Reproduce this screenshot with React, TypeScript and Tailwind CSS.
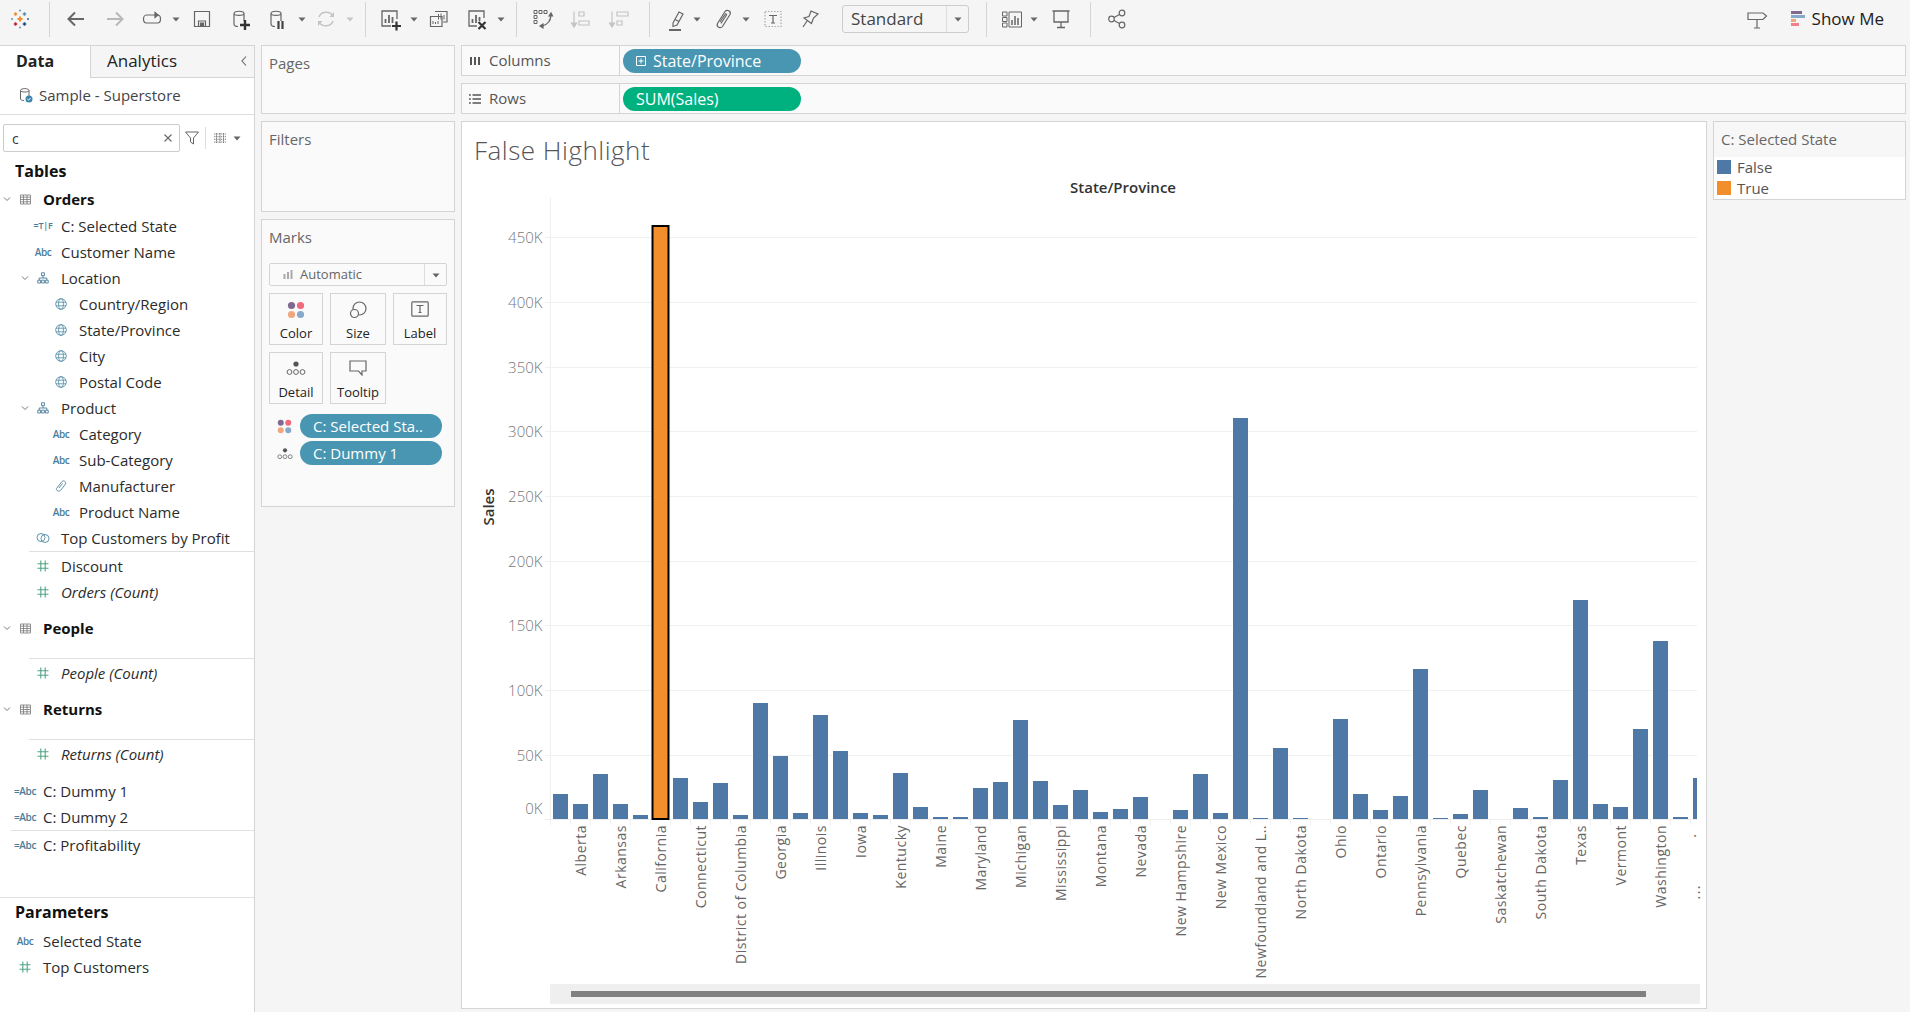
import type { ReactNode } from "react"

const barHeights = [
  25, 15, 45, 15, 4, 594, 41, 17, 36, 4, 116, 63, 6, 104, 68, 6, 4, 46, 12, 2, 2, 31, 37, 99, 38, 14, 29, 7, 10, 22, 0, 9, 45, 6,
  401, 1, 71, 1, 0, 100, 25, 9, 23, 150, 1, 5, 29, 0, 11, 2, 39, 219, 15, 12, 90, 178, 2, 41,
]

const stateLabels: Record<number, string> = {
  1: "Alberta",
  3: "Arkansas",
  5: "California",
  7: "Connecticut",
  9: "District of Columbia",
  11: "Georgia",
  13: "Illinois",
  15: "Iowa",
  17: "Kentucky",
  19: "Maine",
  21: "Maryland",
  23: "Michigan",
  25: "Mississippi",
  27: "Montana",
  29: "Nevada",
  31: "New Hampshire",
  33: "New Mexico",
  35: "Newfoundland and L..",
  37: "North Dakota",
  39: "Ohio",
  41: "Ontario",
  43: "Pennsylvania",
  45: "Quebec",
  47: "Saskatchewan",
  49: "South Dakota",
  51: "Texas",
  53: "Vermont",
  55: "Washington",
}

const axisTicks = ["450K", "400K", "350K", "300K", "250K", "200K", "150K", "100K", "50K"]

function Icon({ children, className = "" }: { children: ReactNode; className?: string }) {
  return (
    <svg viewBox="0 0 24 24" fill="none" stroke="#666" strokeWidth="1.2" className={`h-6 w-6 shrink-0 ${className}`}>
      {children}
    </svg>
  )
}

function Caret({ className = "", light = false }: { className?: string; light?: boolean }) {
  return (
    <svg viewBox="0 0 8 8" className={`h-2 w-2 shrink-0 ${className}`}>
      <path d="M0.5 2.5H7.5L4 6.5Z" fill={light ? "#c4c4c4" : "#666"} />
    </svg>
  )
}

function Sep({ className = "" }: { className?: string }) {
  return <div className={`h-[35px] w-px shrink-0 bg-[#d4d4d4] ${className}`} />
}

function Logo() {
  const marks = [
    { x: 12, y: 12, s: 5, w: 2, c: "#f28e2b" },
    { x: 7.5, y: 7, s: 3.5, w: 1.6, c: "#f28e2b" },
    { x: 16.5, y: 7, s: 3.5, w: 1.6, c: "#5b8fa8" },
    { x: 7.5, y: 17, s: 3.5, w: 1.6, c: "#c72035" },
    { x: 16.5, y: 17, s: 3.5, w: 1.6, c: "#1f4a80" },
    { x: 12, y: 3.5, s: 2, w: 1.2, c: "#6d9bb5" },
    { x: 12, y: 20.5, s: 2, w: 1.2, c: "#7a99ac" },
    { x: 4, y: 12, s: 2, w: 1.2, c: "#7a99ac" },
    { x: 20, y: 12, s: 2, w: 1.2, c: "#4a6d8c" },
  ]
  return (
    <svg viewBox="0 0 24 24" className="ml-2 h-6 w-6 shrink-0">
      {marks.map((m, i) => (
        <path key={i} d={`M${m.x - m.s / 2} ${m.y}h${m.s}M${m.x} ${m.y - m.s / 2}v${m.s}`} stroke={m.c} strokeWidth={m.w} />
      ))}
    </svg>
  )
}

function Cylinder() {
  return <path d="M5 6.5C5 3.5 15 3.5 15 6.5V14M5 6.5C5 9 15 9 15 6.5M5 6.5V17C5 18.5 7 19.5 9 19.5" />
}

function BarsBox() {
  return (
    <>
      <path d="M19 12V4H4V19H13" strokeWidth="1.3" />
      <path d="M7.5 16V12M11 16V8M14.5 16V10" strokeWidth="1.8" />
    </>
  )
}

function Toolbar() {
  return (
    <div className="flex h-[45px] shrink-0 items-center pb-[7px]">
      <Logo />
      <Sep className="ml-[17px]" />
      <Icon className="ml-[14px]">
        <path d="M20 12H5M11 5.5L4.5 12L11 18.5" strokeWidth="2" />
      </Icon>
      <Icon className="ml-[15px]">
        <path d="M4 12H19M13 5.5L19.5 12L13 18.5" stroke="#b8b8b8" strokeWidth="2" />
      </Icon>
      <Icon className="ml-[13px]">
        <path d="M16 8H6.5C2.5 8 2.5 16 6.5 16H17.5C21.5 16 21.5 8 17.5 8" />
        <path d="M15 5.5L18 8L15 10.5Z" fill="#666" />
      </Icon>
      <Caret className="ml-2" />
      <Icon className="ml-[10px]">
        <path d="M4.5 4.5H19.5V19.5H4.5Z" />
        <path d="M8.5 19.5V14H15.5V19.5" />
        <path d="M10.5 16H13.5V19.5H10.5Z" fill="#666" />
      </Icon>
      <Icon className="ml-[15px]">
        <Cylinder />
        <path d="M11 18H21M16 13V23" strokeWidth="2.4" stroke="#333" />
      </Icon>
      <Icon className="ml-[13px]">
        <Cylinder />
        <path d="M12.5 14V22M16.5 14V22" strokeWidth="2.2" stroke="#444" />
      </Icon>
      <Caret className="ml-2" />
      <Icon className="ml-2">
        <path d="M5 10C7 4 16 3.5 19 9M19 14C17 20 8 20.5 5 15" stroke="#c4c4c4" strokeWidth="1.5" />
        <path d="M20 5V10H15.5ZM4 19V14H8.5Z" fill="#c4c4c4" stroke="none" />
      </Icon>
      <Caret light className="ml-2" />
      <Sep className="ml-[11px]" />
      <Icon className="ml-3">
        <BarsBox />
        <path d="M14 19H23M18.5 14.5V23.5" strokeWidth="2.2" stroke="#333" />
      </Icon>
      <Caret className="ml-2" />
      <Icon className="ml-[9px]">
        <path d="M8 4.5H20V15H16" />
        <path d="M3.5 9.5H15V19.5H3.5Z" />
        <path d="M11.5 12.5V7M14 12.5V6.5M17 12.5V8M6 17V14M8.5 17V15M11 17V14" strokeWidth="1" />
      </Icon>
      <Icon className="ml-[14px]">
        <path d="M19 11V4H4V19H12" strokeWidth="1.3" />
        <path d="M7.5 16V12M11 16V8M14.5 14V10" strokeWidth="1.8" />
        <path d="M13.5 15L20.5 22M20.5 15L13.5 22" strokeWidth="2.2" stroke="#333" />
      </Icon>
      <Caret className="ml-2" />
      <Sep className="ml-[11px]" />
      <Icon className="ml-[14px]">
        <path d="M3 3.5H6V6.5H3ZM8 3.5H11V6.5H8ZM13 3.5H16V6.5H13ZM3 8.5H6V11.5H3ZM3 13.5H6V16.5H3Z" strokeWidth="1" />
        <path d="M19.5 8C20.5 13 16.5 18 11 19" />
        <path d="M18 9L20 6L21.5 9ZM12 17L9 19L12 21Z" fill="#666" />
      </Icon>
      <Icon className="ml-[15px]">
        <path d="M4 4.5V19M1.5 16L4 20L6.5 16Z" stroke="#c4c4c4" fill="#c4c4c4" />
        <path d="M9 5H14V9H9ZM9 14H19V18H9Z" stroke="#c4c4c4" />
      </Icon>
      <Icon className="ml-[14px]">
        <path d="M4 4.5V19M1.5 16L4 20L6.5 16Z" stroke="#c4c4c4" fill="#c4c4c4" />
        <path d="M9 5H20V9H9ZM9 14H14V18H9Z" stroke="#c4c4c4" />
      </Icon>
      <Sep className="ml-[17px]" />
      <Icon className="ml-[14px]">
        <path d="M9 16L15 5L19 7L13 18L9 19.5ZM11 12.5L15 14.5" />
        <path d="M5 23H17" strokeWidth="2" />
      </Icon>
      <Caret className="ml-[5px]" />
      <Icon className="ml-[10px]">
        <path d="M6.5 16.5L14 4.5C16 2 20.5 4 19 7.5L11.5 19.5C9.5 22 5 20 6.5 16.5Z" />
        <path d="M10 16.5L15.5 8C16 7 14.5 6.5 14 7.5L9 15" />
      </Icon>
      <Caret className="ml-[7px]" />
      <Icon className="ml-[11px]">
        <path d="M4 4.5H20V19.5H4Z" stroke="#aaa" strokeDasharray="1.5 1.5" />
        <path d="M8 8.5H16M12 8.5V16M10 16H14" strokeWidth="1.2" />
      </Icon>
      <Icon className="ml-[13px]">
        <path d="M13 4L20 7L15.5 11L13.5 16.5L6 11L11 9.5ZM9 14L5 20" />
      </Icon>
      <div className="ml-5 flex h-7 w-[127px] shrink-0 items-center rounded-[3px] border border-[#ccc]">
        <span className="flex-1 pl-2 text-[17px] text-[#444]">Standard</span>
        <div className="flex h-full w-[22px] items-center justify-center border-l border-[#ddd]">
          <Caret />
        </div>
      </div>
      <Sep className="ml-[17px]" />
      <Icon className="ml-[13px]">
        <path d="M2.5 5H7V9H2.5ZM2.5 10.5H7V14.5H2.5ZM2.5 16H7V20H2.5Z" strokeWidth="1" />
        <path d="M9 5H21.5V20H9Z" strokeWidth="1" />
        <path d="M12 18V13M15 18V9M18 18V11" strokeWidth="1.5" />
      </Icon>
      <Caret className="ml-[6px]" />
      <Icon className="ml-[11px]">
        <path d="M3.5 4H20.5M5 4V15H19V4M12 15V20M8 20.5H16" strokeWidth="1.3" />
      </Icon>
      <Sep className="ml-[17px]" />
      <Icon className="ml-[14px]">
        <circle cx="17" cy="6" r="2.8" />
        <circle cx="6.5" cy="12" r="2.8" />
        <circle cx="17" cy="18" r="2.8" />
        <path d="M9 10.5L14.5 7.5M9 13.5L14.5 16.5" />
      </Icon>
      <Icon className="ml-auto">
        <path d="M3 6H18L21.5 9L18 12.5H3ZM12 12.5V21M9 21H15" />
      </Icon>
      <svg viewBox="0 0 14 16" className="ml-[22px] h-4 w-[14px] shrink-0">
        <rect x="0" y="0" width="11" height="3" fill="#81688f" />
        <rect x="0" y="4" width="14" height="3" fill="#86a9cc" />
        <rect x="0" y="8" width="5" height="3" fill="#f1a77e" />
        <rect x="0" y="12" width="8" height="3" fill="#f2808c" />
      </svg>
      <span className="ml-[7px] mr-[26px] text-[17px] text-[#222]">Show Me</span>
    </div>
  )
}

function AbcIcon({ calc = false }: { calc?: boolean }) {
  return (
    <span className="whitespace-nowrap text-[10px] font-semibold tracking-[-0.4px] text-[#4b7d9a]">
      {calc ? "=Abc" : "Abc"}
    </span>
  )
}

function BoolIcon() {
  return <span className="whitespace-nowrap text-[9px] font-semibold tracking-[-0.3px] text-[#4b7d9a]">=T|F</span>
}

function HashIcon() {
  return (
    <svg viewBox="0 0 12 12" className="h-3 w-3" stroke="#4fa584" strokeWidth="1.1" fill="none">
      <path d="M0.5 3.8H11.5M0.5 8.2H11.5M3.8 0.5V11.5M8.2 0.5V11.5" />
    </svg>
  )
}

function GlobeIcon() {
  return (
    <svg viewBox="0 0 12 12" className="h-3 w-3" stroke="#5f94ab" strokeWidth="0.9" fill="none">
      <circle cx="6" cy="6" r="5.3" />
      <ellipse cx="6" cy="6" rx="2.4" ry="5.3" />
      <path d="M1 4.2H11M1 7.8H11" />
    </svg>
  )
}

function HierarchyIcon() {
  return (
    <svg viewBox="0 0 12 12" className="h-3 w-3" stroke="#4b7d9a" strokeWidth="0.9" fill="none">
      <path d="M4.5 0.8H7.5V3.6H4.5ZM0.8 8.2H3.6V11H0.8ZM8.4 8.2H11.2V11H8.4ZM6 3.6V6H2.2V8.2M6 6H9.8V8.2M4.6 8.2H7.4V11H4.6Z" />
    </svg>
  )
}

function TableIcon() {
  return (
    <svg viewBox="0 0 11 11" className="h-[11px] w-[11px]" stroke="#777" strokeWidth="0.8" fill="none">
      <path d="M0.5 1H10.5V10H0.5ZM0.5 3.2H10.5M0.5 5.5H10.5M0.5 7.8H10.5M3.5 1V10M7 1V10" />
    </svg>
  )
}

function ClipIcon() {
  return (
    <svg viewBox="0 0 12 12" className="h-3 w-3" stroke="#5f94ab" strokeWidth="1" fill="none">
      <path d="M1.5 8.5L7 1.5C8.5 0 11.5 1.5 10.5 4L5.5 10.5C4 12 0.5 10.5 1.5 8.5Z" />
      <path d="M4 8L7.5 3.5" />
    </svg>
  )
}

function SetIcon() {
  return (
    <svg viewBox="0 0 14 12" className="h-3 w-[14px]" stroke="#5f94ab" strokeWidth="1" fill="none">
      <circle cx="5" cy="5.5" r="4" />
      <circle cx="9" cy="6.5" r="4" />
    </svg>
  )
}

function Chevron() {
  return (
    <svg viewBox="0 0 10 10" className="mr-[3px] h-[10px] w-[10px] shrink-0" stroke="#777" strokeWidth="1" fill="none">
      <path d="M2 3.5L5 6.5L8 3.5" />
    </svg>
  )
}

function FieldRow({
  gutter,
  icon,
  label,
  chevron = false,
  italic = false,
  bold = false,
}: {
  gutter: string
  icon: ReactNode
  label: string
  chevron?: boolean
  italic?: boolean
  bold?: boolean
}) {
  return (
    <div className="flex h-[26px] items-center">
      <div className={`flex shrink-0 items-center justify-end pr-2 ${gutter}`}>
        {chevron && <Chevron />}
        <div className="flex w-5 shrink-0 justify-center">{icon}</div>
      </div>
      <span className={`whitespace-nowrap text-[15px] text-[#2b2b2b] ${italic ? "italic" : ""} ${bold ? "text-[14px] font-bold text-[#111]" : ""}`}>
        {label}
      </span>
    </div>
  )
}

function DataPane() {
  return (
    <aside className="flex w-[255px] shrink-0 flex-col border-r border-[#d4d4d4] bg-white">
      <div className="flex h-[33px] shrink-0">
        <div className="flex w-[90px] items-center border-t border-[#d4d4d4] pb-[2px] pl-[16px] text-[16px] font-bold text-[#222]">Data</div>
        <div className="flex flex-1 items-center justify-between border-b border-l border-t border-[#d4d4d4] bg-[#f5f5f5] pb-[2px] pl-[16px] pr-[5px] text-[17px] text-[#222]">
          Analytics
          <svg viewBox="0 0 10 12" className="h-3 w-[10px]" stroke="#666" strokeWidth="1.1" fill="none">
            <path d="M7 1.5L3 6L7 10.5" />
          </svg>
        </div>
      </div>
      <div className="flex h-[37px] shrink-0 items-center border-b border-[#ddd] pb-[2px] pl-[19px]">
        <svg viewBox="0 0 14 16" className="h-4 w-[14px]" fill="none" stroke="#666" strokeWidth="1">
          <path d="M1.5 3.5C1.5 1 10 1 10 3.5V9M1.5 3.5C1.5 5.5 10 5.5 10 3.5M1.5 3.5V12C1.5 13 3 13.5 5 13.5" />
          <circle cx="10" cy="12" r="3.5" fill="#3f84a8" stroke="none" />
          <path d="M8.4 12L9.6 13.2L11.6 10.9" stroke="#fff" />
        </svg>
        <span className="ml-[6px] text-[15px] text-[#444]">Sample - Superstore</span>
      </div>
      <div className="mt-[9px] flex h-7 shrink-0 items-center pl-[3px]">
        <div className="flex h-7 w-[177px] items-center justify-between rounded-[2px] border border-[#ccc] pl-2 pr-[6px] text-[14px] text-[#333]">
          c
          <svg viewBox="0 0 10 10" className="h-[10px] w-[10px]" stroke="#666" strokeWidth="1.1">
            <path d="M1.5 1.5L8.5 8.5M8.5 1.5L1.5 8.5" />
          </svg>
        </div>
        <svg viewBox="0 0 14 14" className="ml-[5px] h-[14px] w-[14px]" stroke="#666" strokeWidth="1" fill="none">
          <path d="M0.5 1H13.5L8.5 7V13L5.5 11V7Z" />
        </svg>
        <div className="ml-[6px] h-[22px] w-px bg-[#ddd]" />
        <svg viewBox="0 0 12 10" className="ml-2 h-[10px] w-3" stroke="#666" strokeWidth="0.8">
          <path d="M0 1H12M0 3.7H12M0 6.3H12M0 9H12M2.5 0V10M6 0V10M9.5 0V10" strokeDasharray="1.5 0.7" />
        </svg>
        <Caret className="ml-[7px]" />
      </div>
      <div className="mt-[6px] flex h-[26px] shrink-0 items-center pl-[15px] text-[16px] font-bold text-[#111]">Tables</div>
      <div className="mt-[3px] flex flex-col">
        <div className="-mt-px mb-px">
          <FieldRow gutter="w-[43px]" chevron bold icon={<TableIcon />} label="Orders" />
        </div>
        <FieldRow gutter="w-[61px]" icon={<BoolIcon />} label="C: Selected State" />
        <FieldRow gutter="w-[61px]" icon={<AbcIcon />} label="Customer Name" />
        <FieldRow gutter="w-[61px]" chevron icon={<HierarchyIcon />} label="Location" />
        <FieldRow gutter="w-[79px]" icon={<GlobeIcon />} label="Country/Region" />
        <FieldRow gutter="w-[79px]" icon={<GlobeIcon />} label="State/Province" />
        <FieldRow gutter="w-[79px]" icon={<GlobeIcon />} label="City" />
        <FieldRow gutter="w-[79px]" icon={<GlobeIcon />} label="Postal Code" />
        <FieldRow gutter="w-[61px]" chevron icon={<HierarchyIcon />} label="Product" />
        <FieldRow gutter="w-[79px]" icon={<AbcIcon />} label="Category" />
        <FieldRow gutter="w-[79px]" icon={<AbcIcon />} label="Sub-Category" />
        <FieldRow gutter="w-[79px]" icon={<ClipIcon />} label="Manufacturer" />
        <FieldRow gutter="w-[79px]" icon={<AbcIcon />} label="Product Name" />
        <FieldRow gutter="w-[61px]" icon={<SetIcon />} label="Top Customers by Profit" />
        <div className="ml-[29px] h-px bg-[#e0e0e0]" />
        <div className="mt-px">
          <FieldRow gutter="w-[61px]" icon={<HashIcon />} label="Discount" />
          <FieldRow gutter="w-[61px]" italic icon={<HashIcon />} label="Orders (Count)" />
        </div>
        <div className="mt-[10px]">
          <FieldRow gutter="w-[43px]" chevron bold icon={<TableIcon />} label="People" />
        </div>
        <div className="ml-[29px] mt-[17px] h-px bg-[#e0e0e0]" />
        <div className="mt-px">
          <FieldRow gutter="w-[61px]" italic icon={<HashIcon />} label="People (Count)" />
        </div>
        <div className="mt-[10px]">
          <FieldRow gutter="w-[43px]" chevron bold icon={<TableIcon />} label="Returns" />
        </div>
        <div className="ml-[29px] mt-[17px] h-px bg-[#e0e0e0]" />
        <div className="mt-px">
          <FieldRow gutter="w-[61px]" italic icon={<HashIcon />} label="Returns (Count)" />
        </div>
        <div className="mt-[11px]">
          <FieldRow gutter="w-[43px]" icon={<AbcIcon calc />} label="C: Dummy 1" />
          <FieldRow gutter="w-[43px]" icon={<AbcIcon calc />} label="C: Dummy 2" />
        </div>
        <div className="ml-[11px] h-px bg-[#e0e0e0]" />
        <div className="mt-px">
          <FieldRow gutter="w-[43px]" icon={<AbcIcon calc />} label="C: Profitability" />
        </div>
        <div className="mt-[39px] h-px bg-[#e0e0e0]" />
        <div className="mt-px flex h-[26px] items-center pl-[15px] text-[16px] font-bold text-[#111]">Parameters</div>
        <div className="mt-[3px]">
          <FieldRow gutter="w-[43px]" icon={<AbcIcon />} label="Selected State" />
          <FieldRow gutter="w-[43px]" icon={<HashIcon />} label="Top Customers" />
        </div>
      </div>
    </aside>
  )
}

function MarkCard({ icon, label }: { icon: ReactNode; label: string }) {
  return (
    <div className="flex h-[52px] flex-col items-center justify-between border border-[#d4d4d4] pb-px pt-[7px] text-[13px] text-[#222]">
      {icon}
      <span>{label}</span>
    </div>
  )
}

function ColorDots({ small = false }: { small?: boolean }) {
  return (
    <svg viewBox="0 0 18 18" className={small ? "h-[15px] w-[15px]" : "h-[18px] w-[18px]"}>
      <circle cx="4.5" cy="4.5" r="3.6" fill="#81688f" />
      <circle cx="13.5" cy="4.5" r="3.6" fill="#f2687c" />
      <circle cx="4.5" cy="13.5" r="3.6" fill="#f1a77e" />
      <circle cx="13.5" cy="13.5" r="3.6" fill="#86a9cc" />
    </svg>
  )
}

function DetailDots({ small = false }: { small?: boolean }) {
  return (
    <svg viewBox="0 0 20 16" className={small ? "h-[13px] w-4" : "h-4 w-5"} fill="none" stroke="#666" strokeWidth="1">
      <circle cx="10" cy="4" r="2.6" fill="#555" stroke="none" />
      <circle cx="3.5" cy="12" r="2.4" />
      <circle cx="10" cy="12" r="2.4" />
      <circle cx="16.5" cy="12" r="2.4" />
    </svg>
  )
}

function Pill({ children, className }: { children: ReactNode; className: string }) {
  return <div className={`flex h-6 items-center whitespace-nowrap rounded-full text-white ${className}`}>{children}</div>
}

function CardsColumn() {
  return (
    <div className="ml-[6px] flex w-[194px] shrink-0 flex-col gap-[7px]">
      <div className="h-[69px] border border-[#d4d4d4] bg-[#fafafa] px-[7px] pt-[7px] text-[15px] leading-[20px] text-[#666]">Pages</div>
      <div className="h-[91px] border border-[#d4d4d4] bg-[#fafafa] px-[7px] pt-[7px] text-[15px] leading-[20px] text-[#666]">Filters</div>
      <div className="h-[288px] border border-[#d4d4d4] bg-[#fafafa] px-[7px] pt-[7px]">
        <div className="text-[15px] leading-[20px] text-[#666]">Marks</div>
        <div className="mt-[16px] flex h-[23px] w-[178px] items-center rounded-[2px] border border-[#d4d4d4] text-[13px] text-[#666]">
          <svg viewBox="0 0 10 9" className="ml-[13px] h-[9px] w-[10px]">
            <path d="M0.5 4H2.5V9H0.5ZM4 2H6V9H4ZM7.5 0H9.5V9H7.5Z" fill="#aaa" />
          </svg>
          <span className="ml-[7px] flex-1">Automatic</span>
          <div className="flex h-full w-[22px] items-center justify-center border-l border-[#ddd]">
            <Caret />
          </div>
        </div>
        <div className="mt-[7px] grid w-[178px] grid-cols-[54px_56px_54px] gap-[7px]">
          <MarkCard icon={<ColorDots />} label="Color" />
          <MarkCard
            icon={
              <svg viewBox="0 0 18 18" className="h-[18px] w-[18px]" fill="none" stroke="#666" strokeWidth="1.2">
                <circle cx="10.5" cy="7.5" r="6.5" />
                <circle cx="5.5" cy="12.5" r="4" fill="#fafafa" />
              </svg>
            }
            label="Size"
          />
          <MarkCard
            icon={
              <svg viewBox="0 0 18 16" className="h-4 w-[18px]" fill="none" stroke="#666" strokeWidth="1.2">
                <rect x="0.8" y="0.8" width="16.4" height="14.4" rx="1" />
                <path d="M5.5 4.5H12.5M9 4.5V11.5M7.5 11.5H10.5" />
              </svg>
            }
            label="Label"
          />
          <MarkCard icon={<DetailDots />} label="Detail" />
          <MarkCard
            icon={
              <svg viewBox="0 0 18 16" className="h-4 w-[18px]" fill="none" stroke="#666" strokeWidth="1.2">
                <path d="M1 1H17V11H13V15L9.5 11H1Z" />
              </svg>
            }
            label="Tooltip"
          />
        </div>
        <div className="mt-[10px] flex w-[178px] items-center">
          <div className="flex w-[31px] shrink-0 justify-start pl-[8px]">
            <ColorDots small />
          </div>
          <Pill className="w-[142px] bg-[#4996b2] pl-[13px] text-[15px]">C: Selected Sta..</Pill>
        </div>
        <div className="mt-[3px] flex w-[178px] items-center">
          <div className="flex w-[31px] shrink-0 justify-start pl-[8px]">
            <DetailDots small />
          </div>
          <Pill className="w-[142px] bg-[#4996b2] pl-[13px] text-[15px]">C: Dummy 1</Pill>
        </div>
      </div>
    </div>
  )
}

function Shelf({ icon, label, children }: { icon: ReactNode; label: string; children: ReactNode }) {
  return (
    <div className="flex h-[31px] shrink-0 items-center border border-[#d4d4d4] bg-[#fafafa]">
      <div className="flex h-full w-[158px] shrink-0 items-center border-r border-[#d4d4d4]">
        <div className="ml-[7px] w-5">{icon}</div>
        <span className="text-[15px] text-[#555]">{label}</span>
      </div>
      <div className="ml-[3px] pt-px">{children}</div>
    </div>
  )
}

function BarChart() {
  const baseline = 819
  return (
    <svg viewBox="462 195 1244 789" className="block h-[789px] w-[1244px] shrink-0">
      <path d="M550.5 197V819" stroke="#f0f0f0" />
      {axisTicks.map((t, i) => {
        const y = Math.round(237.3 + i * 64.67) + 0.5
        return (
          <g key={t}>
            <path d={`M545 ${y}H1697`} stroke="#f0f0f0" />
            <text x="542.5" y={y + 5} textAnchor="end" className="fill-[#777] text-[15px] font-light">
              {t}
            </text>
          </g>
        )
      })}
      <text x="542.5" y="814" textAnchor="end" className="fill-[#777] text-[15px] font-light">
        0K
      </text>
      <text transform="translate(494 507) rotate(-90)" textAnchor="middle" className="fill-[#333] text-[15px] font-semibold">
        Sales
      </text>
      <path d={`M545 ${baseline + 0.5}H1697`} stroke="#eee" />
      {barHeights.map((_, i) => (
        <path key={i} d={`M${550.5 + i * 20} 819V825`} stroke="#f0f0f0" />
      ))}
      {barHeights.map((h, i) => {
        const x = 553 + i * 20
        if (h === 0) return null
        if (i === 5) {
          return <rect key={i} x={x - 0.5} y={baseline - h + 1} width={16} height={h - 1} fill="#f28e2b" stroke="#000" strokeWidth="2" />
        }
        const w = i === 57 ? 4 : 15
        return <rect key={i} x={x} y={baseline - h} width={w} height={h} fill="#4e79a7" />
      })}
      {Object.entries(stateLabels).map(([i, label]) => {
        const cx = 553 + Number(i) * 20 + 7.5
        return (
          <text key={i} transform={`translate(${cx + 5} 825) rotate(-90)`} textAnchor="end" className="fill-[#666] text-[14px] tracking-[0.5px]">
            {label}
          </text>
        )
      })}
      <text transform="translate(1700 834) rotate(-90)" textAnchor="end" className="fill-[#666] text-[14px]">
        {"\u00B7"}
      </text>
      <text transform="translate(1700 884) rotate(-90)" textAnchor="end" className="fill-[#666] text-[14px] tracking-[1.5px]">
        ...
      </text>
    </svg>
  )
}

function Canvas() {
  return (
    <div className="flex h-[888px] w-[1246px] shrink-0 flex-col overflow-hidden border border-[#d4d4d4] bg-white">
      <div className="h-[58px] shrink-0 pl-[12px] pt-[12px] text-[26px] font-light leading-[32px] tracking-[0.5px] text-[#555]">False Highlight</div>
      <div className="h-[15px] shrink-0 pl-[596px] text-[15px] font-semibold leading-[15px] text-[#333]">
        <span className="block w-[130px] whitespace-nowrap text-center">State/Province</span>
      </div>
      <BarChart />
      <div className="ml-[88px] h-5 w-[1150px] shrink-0 bg-[#efefef] pl-[21px] pt-[7px]">
        <div className="h-[6px] w-[1075px] bg-[#808080]" />
      </div>
    </div>
  )
}

function Legend() {
  return (
    <div className="ml-[6px] h-[79px] w-[193px] shrink-0 border border-[#d4d4d4] bg-white">
      <div className="flex h-[35px] items-center bg-[#f7f7f7] pl-[7px] text-[15px] text-[#666]">C: Selected State</div>
      <div className="mt-[3px] flex h-[14px] items-center pl-[3px] text-[15px] text-[#555]">
        <span className="h-[14px] w-[14px] bg-[#4e79a7]" />
        <span className="ml-[6px]">False</span>
      </div>
      <div className="mt-[7px] flex h-[14px] items-center pl-[3px] text-[15px] text-[#555]">
        <span className="h-[14px] w-[14px] bg-[#f28e2b]" />
        <span className="ml-[6px]">True</span>
      </div>
    </div>
  )
}

export default function App() {
  return (
    <div className="flex h-[1012px] w-[1910px] flex-col overflow-hidden bg-[#f5f5f5] font-['Open_Sans',sans-serif]">
      <Toolbar />
      <div className="flex min-h-0 flex-1">
        <DataPane />
        <CardsColumn />
        <div className="ml-[6px] flex w-[1445px] shrink-0 flex-col gap-[7px]">
          <Shelf
            label="Columns"
            icon={
              <svg viewBox="0 0 12 12" className="h-3 w-3" fill="#555">
                <path d="M1 2H3V10H1ZM5 2H7V10H5ZM9 2H11V10H9Z" />
              </svg>
            }
          >
            <Pill className="w-[178px] bg-[#4996b2] pl-[13px] text-[16px]">
              <svg viewBox="0 0 10 10" className="mr-[7px] h-[10px] w-[10px]" fill="none" stroke="#fff" strokeWidth="1">
                <path d="M0.5 0.5H9.5V9.5H0.5ZM2.5 5H7.5M5 2.5V7.5" />
              </svg>
              State/Province
            </Pill>
          </Shelf>
          <Shelf
            label="Rows"
            icon={
              <svg viewBox="0 0 12 12" className="h-3 w-3" stroke="#555" strokeWidth="1.3">
                <path d="M0 2H1.8M3.5 2H12M0 6H1.8M3.5 6H12M0 10H1.8M3.5 10H12" />
              </svg>
            }
          >
            <Pill className="w-[178px] bg-[#00b180] pl-[13px] text-[16px]">SUM(Sales)</Pill>
          </Shelf>
          <div className="flex items-start">
            <Canvas />
            <Legend />
          </div>
        </div>
      </div>
    </div>
  )
}
